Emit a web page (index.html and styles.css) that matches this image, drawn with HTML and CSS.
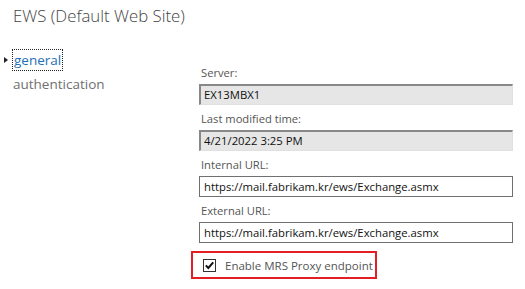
FILE: index.html
```html
<!DOCTYPE html>
<html>
<head>
<meta charset="utf-8">
<link rel="stylesheet" href="styles.css">
</head>
<body>
<h1 class="title">EWS (Default Web Site)</h1>
<div class="content">
  <nav class="nav">
    <div class="nav-item active">
      <span class="arrow"></span>
      <a class="nav-link focus">general</a>
    </div>
    <div class="nav-item">
      <a class="nav-link plain">authentication</a>
    </div>
  </nav>
  <form class="form">
    <div class="field">
      <label class="label">Server:</label>
      <div class="input readonly">EX13MBX1</div>
    </div>
    <div class="field">
      <label class="label">Last modified time:</label>
      <div class="input readonly">4/21/2022 3:25 PM</div>
    </div>
    <div class="field">
      <label class="label">Internal URL:</label>
      <div class="input">https://mail.fabrikam.kr/ews/Exchange.asmx</div>
    </div>
    <div class="field">
      <label class="label">External URL:</label>
      <div class="input">https://mail.fabrikam.kr/ews/Exchange.asmx</div>
    </div>
    <div class="check-row">
      <div class="highlight">
        <svg class="checkbox" width="13" height="13" viewBox="0 0 13 13">
          <rect x="0.5" y="0.5" width="12" height="12" fill="#fff" stroke="#333"/>
          <path d="M2.8 6.4 L5.3 9 L10.2 3.4" fill="none" stroke="#111" stroke-width="2"/>
        </svg>
        <span class="check-label">Enable MRS Proxy endpoint</span>
      </div>
    </div>
  </form>
</div>
</body>
</html>
```
FILE: styles.css
```css
html, body {
  margin: 0;
  padding: 0;
  background: #fff;
}
body {
  font-family: "Open Sans", "Noto Sans", sans-serif;
  width: 525px;
  height: 289px;
  overflow: hidden;
}
.title {
  margin: 0;
  padding: 4px 0 0 13px;
  font-size: 16.8px;
  font-weight: 300;
  color: #444;
  line-height: 24px;
}
.content {
  display: flex;
  padding-top: 20px;
}
.nav {
  width: 199px;
  flex: none;
  display: flex;
  flex-direction: column;
}
.nav-item {
  position: relative;
  height: 24px;
  display: flex;
  align-items: center;
  padding-left: 13px;
}
.arrow {
  position: absolute;
  left: 4px;
  top: 9px;
  width: 0;
  height: 0;
  border-top: 3px solid transparent;
  border-bottom: 3px solid transparent;
  border-left: 4px solid #222;
}
.nav-link {
  font-size: 13.5px;
  line-height: 18px;
}
.focus {
  color: #1e6fb6;
  outline: 1px dotted #222;
  padding: 1px 1px 1px 1px;
}
.plain {
  color: #707070;
}
.form {
  width: 314px;
  display: flex;
  flex-direction: column;
  padding-top: 16px;
}
.field {
  display: flex;
  flex-direction: column;
  margin-bottom: 5px;
}
.label {
  font-size: 11.2px;
  color: #555;
  line-height: 18px;
  padding-left: 2px;
  height: 20px;
}
.input {
  height: 21px;
  box-sizing: border-box;
  border: 1px solid #707070;
  font-size: 11.3px;
  line-height: 19px;
  padding-left: 4px;
  color: #111;
  white-space: nowrap;
}
.readonly {
  background: #e6e6e6;
  border-top: 2px solid #888;
  border-left: 2px solid #888;
  border-right: 1px solid #e0e0e0;
  border-bottom: 1px solid #e0e0e0;
  line-height: 18px;
  padding-left: 3px;
}
.check-row {
  display: flex;
  margin-left: -8px;
  margin-top: 3px;
}
.highlight {
  display: flex;
  align-items: center;
  border: 2px solid #e31e25;
  height: 24px;
  padding: 0 2px 0 10px;
}
.checkbox {
  display: block;
  margin-right: 9px;
}
.check-label {
  font-size: 11.5px;
  color: #555;
}
```
